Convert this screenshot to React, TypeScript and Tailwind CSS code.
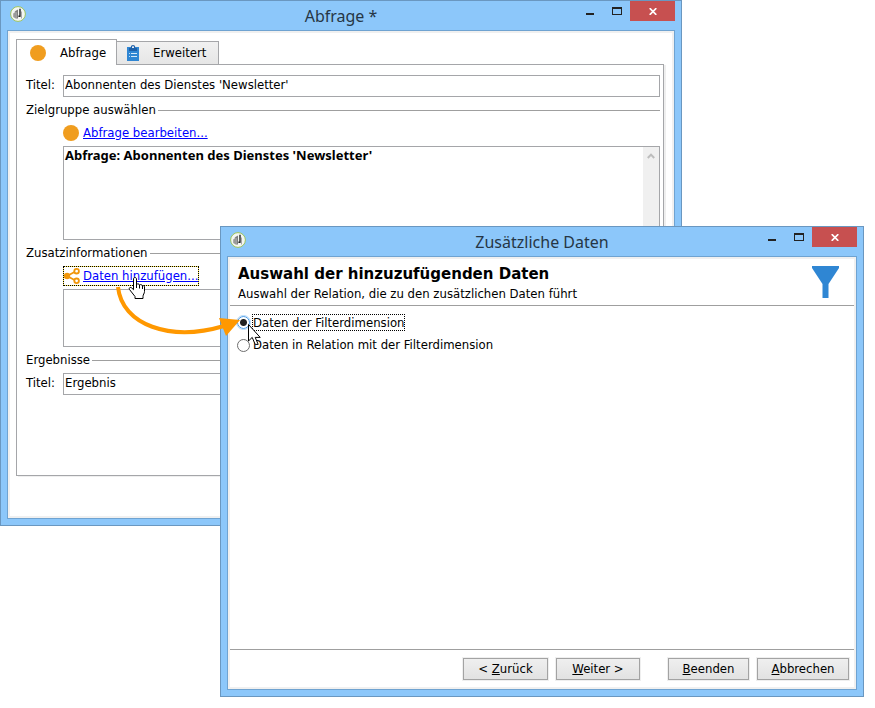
import type { ReactNode } from "react";

const edge = "border-[#a5a6a9]";

function AppLogo() {
  return (
    <svg className="mt-[5px] size-4" viewBox="0 0 16 16" aria-hidden="true">
      <circle cx="8" cy="8" r="7.4" fill="#f4f6f2" stroke="#9cc35c" strokeWidth="1" />
      <path d="M3.2 7.5 6.5 5v8L3.2 11z" fill="#9a9a9a" />
      <path d="M4.5 5.5 8 3.500v9H6.500V6.200z" fill="#7d7d7d" />
      <path d="M10 2.800v7.400M10.600 10.300H8.400" fill="none" stroke="#222" strokeWidth="1.4" />
      <path d="M11.500 5.500v7" stroke="#a8a8a8" strokeWidth="1" />
    </svg>
  );
}

function Win({ title, place, children }: { title: string; place: string; children: ReactNode }) {
  return (
    <section
      aria-label={title}
      className={`absolute flex flex-col border border-[#6a97c0] bg-[#8cc7fa] px-1.5 pb-1.5 ${place}`}
    >
      <header className="grid h-[29px] shrink-0 grid-cols-[1fr_auto_1fr] items-start">
        <div className="pl-[3px]">
          <AppLogo />
        </div>
        <h1 className="pt-[3px] font-['Noto_Sans',sans-serif] text-[16px] leading-6 text-[#263645]">{title}</h1>
        <div className="flex justify-end">
          <button aria-label="Minimieren" className="flex h-5 w-[27px] items-start justify-center pt-3">
            <span className="h-0.5 w-2 bg-[#222]" />
          </button>
          <button aria-label="Maximieren" className="flex h-5 w-[27px] items-start justify-center pt-1.5">
            <span className="h-2 w-2.5 border border-t-2 border-[#222]" />
          </button>
          <button aria-label="Schließen" className="flex h-5 w-[45px] items-center justify-center bg-[#c75050]">
            <svg className="h-[7px] w-2" viewBox="0 0 8 7" aria-hidden="true">
              <path d="M.7.2 7.3 6.8M7.3.2.7 6.8" stroke="#fff" strokeWidth="1.7" />
            </svg>
          </button>
        </div>
      </header>
      <div className="flex min-h-0 grow flex-col border border-[#6fa3d1] bg-[#f0f0f0] p-0.5">
        <div className="flex min-h-0 grow flex-col bg-white">{children}</div>
      </div>
    </section>
  );
}

function GroupTitle({ children }: { children: ReactNode }) {
  return (
    <h2 className="flex h-[18px] items-center gap-0.5 leading-[18px] after:h-px after:grow after:bg-[#9f9f9f]">
      <span className="pb-px">{children}</span>
    </h2>
  );
}

function Dot() {
  return <span className="size-4 shrink-0 rounded-full bg-[#f09d1f]" />;
}

function ClipboardIcon() {
  return (
    <svg className="h-4 w-3" viewBox="0 0 12 16" aria-hidden="true">
      <path d="M0 2h12v14H0z" fill="#2f86d3" />
      <path d="M2 3h8v3H2z" fill="#1d5fa8" />
      <path d="M4.500 3V1.600C4.500.400 7.500.400 7.500 1.600V3" fill="#fff" stroke="#1d5fa8" strokeWidth="1.2" />
      <path d="M4 8.500h6M4 11.500h6" stroke="#d5e9f8" strokeWidth="1" />
      <path d="M2 8.500h1M2 11.500h1" stroke="#bcdcf5" strokeWidth="1" />
    </svg>
  );
}

function ShareIcon() {
  return (
    <svg className="size-4 shrink-0" viewBox="0 0 16 16" aria-hidden="true">
      <g fill="none" stroke="#f0960a" strokeWidth="1.8">
        <path d="M3 8 11 3.8M3 8l8 4.2" />
        <circle cx="12.6" cy="3.2" r="2.3" fill="#fff" />
        <circle cx="12.6" cy="12.8" r="2.3" fill="#fff" />
      </g>
      <circle cx="3" cy="8" r="3.2" fill="#f0960a" />
    </svg>
  );
}

function WizardButton({ wide, children }: { wide: string; children: ReactNode }) {
  return (
    <button
      className={`h-[22px] border border-[#a3a3a3] bg-linear-to-b from-[#efefef] to-[#e2e2e2] leading-5 outline outline-[#efefef] ${wide}`}
    >
      {children}
    </button>
  );
}

const radio =
  "size-[13px] shrink-0 appearance-none rounded-full border border-[#6e6e6e] bg-white checked:border-[#3f95e6] checked:bg-[radial-gradient(circle,#222_3px,#fff_4px)] checked:outline checked:outline-[#b5dafa]";

export default function App() {
  return (
    <main className="relative min-h-screen overflow-hidden bg-white font-['DejaVu_Sans_Condensed','DejaVu_Sans',sans-serif] text-[13px] text-black">
      <Win title="Abfrage *" place="left-0 right-[193px] top-0 h-[526px]">
        <div className="flex flex-col px-1.5 pt-1.5">
          <div role="tablist" className="z-10 -mb-px flex items-end">
            <button
              role="tab"
              aria-selected="true"
              className={`flex h-[26px] w-[101px] items-center gap-3.5 border border-b-0 bg-white pl-[13px] ${edge}`}
            >
              <Dot />
              Abfrage
            </button>
            <button
              role="tab"
              aria-selected="false"
              className={`flex h-6 w-[102px] items-center gap-3.5 border border-l-0 bg-linear-to-b from-[#f1f1f1] to-[#e6e6e6] pl-2.5 ${edge}`}
            >
              <ClipboardIcon />
              Erweitert
            </button>
          </div>
          <div className={`mr-0.5 flex h-[412px] flex-col border bg-white pl-[9px] pr-[3px] pt-2.5 shadow-[2px_1px_0_#efefef] ${edge}`}>
            <div className="flex">
              <label htmlFor="titel" className="w-[37px] leading-5">
                Titel:
              </label>
              <input
                id="titel"
                defaultValue="Abonnenten des Dienstes 'Newsletter'"
                className={`h-[22px] min-w-0 grow border bg-white px-px pb-[3px] ${edge}`}
              />
            </div>
            <div className="mt-1">
              <GroupTitle>Zielgruppe auswählen</GroupTitle>
            </div>
            <div className="ml-[37px] mt-1.5 flex h-4 items-center gap-1">
              <Dot />
              <a href="#abfrage" className="pb-px text-[#0000ff] underline">
                Abfrage bearbeiten...
              </a>
            </div>
            <div className={`ml-[37px] mt-[5px] flex h-[94px] border ${edge}`}>
              <p className="grow px-px font-['Noto_Sans',sans-serif] font-bold leading-4">
                Abfrage: Abonnenten des Dienstes 'Newsletter'
              </p>
              <div className="flex w-4 justify-center bg-[#f0f0f0] pt-1.5">
                <svg className="h-1.5 w-2" viewBox="0 0 8 6" aria-hidden="true">
                  <path d="M.8 5 4 1.6 7.2 5" fill="none" stroke="#bdbdbd" strokeWidth="2" />
                </svg>
              </div>
            </div>
            <div className="mt-1">
              <GroupTitle>Zusatzinformationen</GroupTitle>
            </div>
            <a
              href="#daten"
              className="ml-[37px] mt-1 flex h-5 w-fit border border-dotted border-black bg-[#ffe95c] whitespace-nowrap text-[#0000ff]"
            >
              <span className="flex items-center gap-[3px] bg-white">
                <ShareIcon />
                <span className="pb-px underline">Daten hinzufügen...</span>
              </span>
            </a>
            <div className={`ml-[37px] mt-[3px] h-[58px] border ${edge}`} />
            <div className="mt-1">
              <GroupTitle>Ergebnisse</GroupTitle>
            </div>
            <div className="mt-1 flex">
              <label htmlFor="ergebnis" className="w-[37px] leading-5">
                Titel:
              </label>
              <input
                id="ergebnis"
                defaultValue="Ergebnis"
                className={`h-[22px] min-w-0 grow border bg-white px-px pb-[3px] ${edge}`}
              />
            </div>
          </div>
        </div>
      </Win>

      <Win title="Zusätzliche Daten" place="left-[220px] right-[11px] top-[226px] z-20 h-[471px]">
        <div className="flex h-[47px] shrink-0 items-start justify-between border-b border-[#9f9f9f] pl-2 pr-[15px] pt-1">
          <div>
            <h2 className="font-['DejaVu_Sans',sans-serif] text-[15px] font-bold leading-[22px]">
              Auswahl der hinzuzufügenden Daten
            </h2>
            <p className="leading-[18px]">Auswahl der Relation, die zu den zusätzlichen Daten führt</p>
          </div>
          <svg className="mt-[3px] h-8 w-[27px]" viewBox="0 0 27 32" aria-hidden="true">
            <path d="M0 0h27v2L16.500 18V32h-6V18L0 2z" fill="#2f86d3" />
          </svg>
        </div>
        <div className="flex grow flex-col gap-[5px] pl-[7px] pt-[7px]">
          <div className="flex h-[18px] items-center gap-0.5">
            <input id="filter" type="radio" name="daten" defaultChecked className={radio} />
            <label htmlFor="filter" className="h-[17px] border border-dotted border-black leading-[15px]">
              Daten der Filterdimension
            </label>
          </div>
          <div className="flex h-[18px] items-center gap-[3px]">
            <input id="relation" type="radio" name="daten" className={radio} />
            <label htmlFor="relation">Daten in Relation mit der Filterdimension</label>
          </div>
        </div>
        <footer className="flex h-[38px] shrink-0 items-start justify-end gap-2 border-t border-[#9f9f9f] pr-[5px] pt-2">
          <WizardButton wide="w-[85px]">
            &lt; <span className="underline">Z</span>urück
          </WizardButton>
          <WizardButton wide="mr-5 w-[84px]">
            <span className="underline">W</span>eiter &gt;
          </WizardButton>
          <WizardButton wide="w-[81px]">
            <span className="underline">B</span>eenden
          </WizardButton>
          <WizardButton wide="w-[92px]">
            <span className="underline">A</span>bbrechen
          </WizardButton>
        </footer>
      </Win>

      <svg className="pointer-events-none absolute left-[110px] top-[270px] z-30 h-20 w-40" viewBox="110 270 160 80" aria-hidden="true">
        <path d="M118 287C122 325 170 342 224 326" fill="none" stroke="#ff9800" strokeWidth="4" />
        <path d="M219 318 240 320 226 336z" fill="#ff9800" />
        <path
          d="M133.500 279c0-2 3-2 3 0v5.500c1-1 2.600-.8 3 .5 1-.8 2.500-.5 2.800.8 1-.6 2.200 0 2.200 1.200v4.500c0 2-1.500 3-1.500 5v2h-8v-2l-5.500-7c-1-1.800 1-2.800 2.300-1.500l1.700 1.700z"
          fill="#fff"
          stroke="#000"
        />
        <path d="M136.500 284v4M139.500 285v3.500M142.500 286v3" stroke="#000" />
        <path
          d="M248.500 324.500v16.500l3.700-3.600 3 7h3l-3-7h5z"
          fill="#fff"
          stroke="#000"
        />
      </svg>
    </main>
  );
}
